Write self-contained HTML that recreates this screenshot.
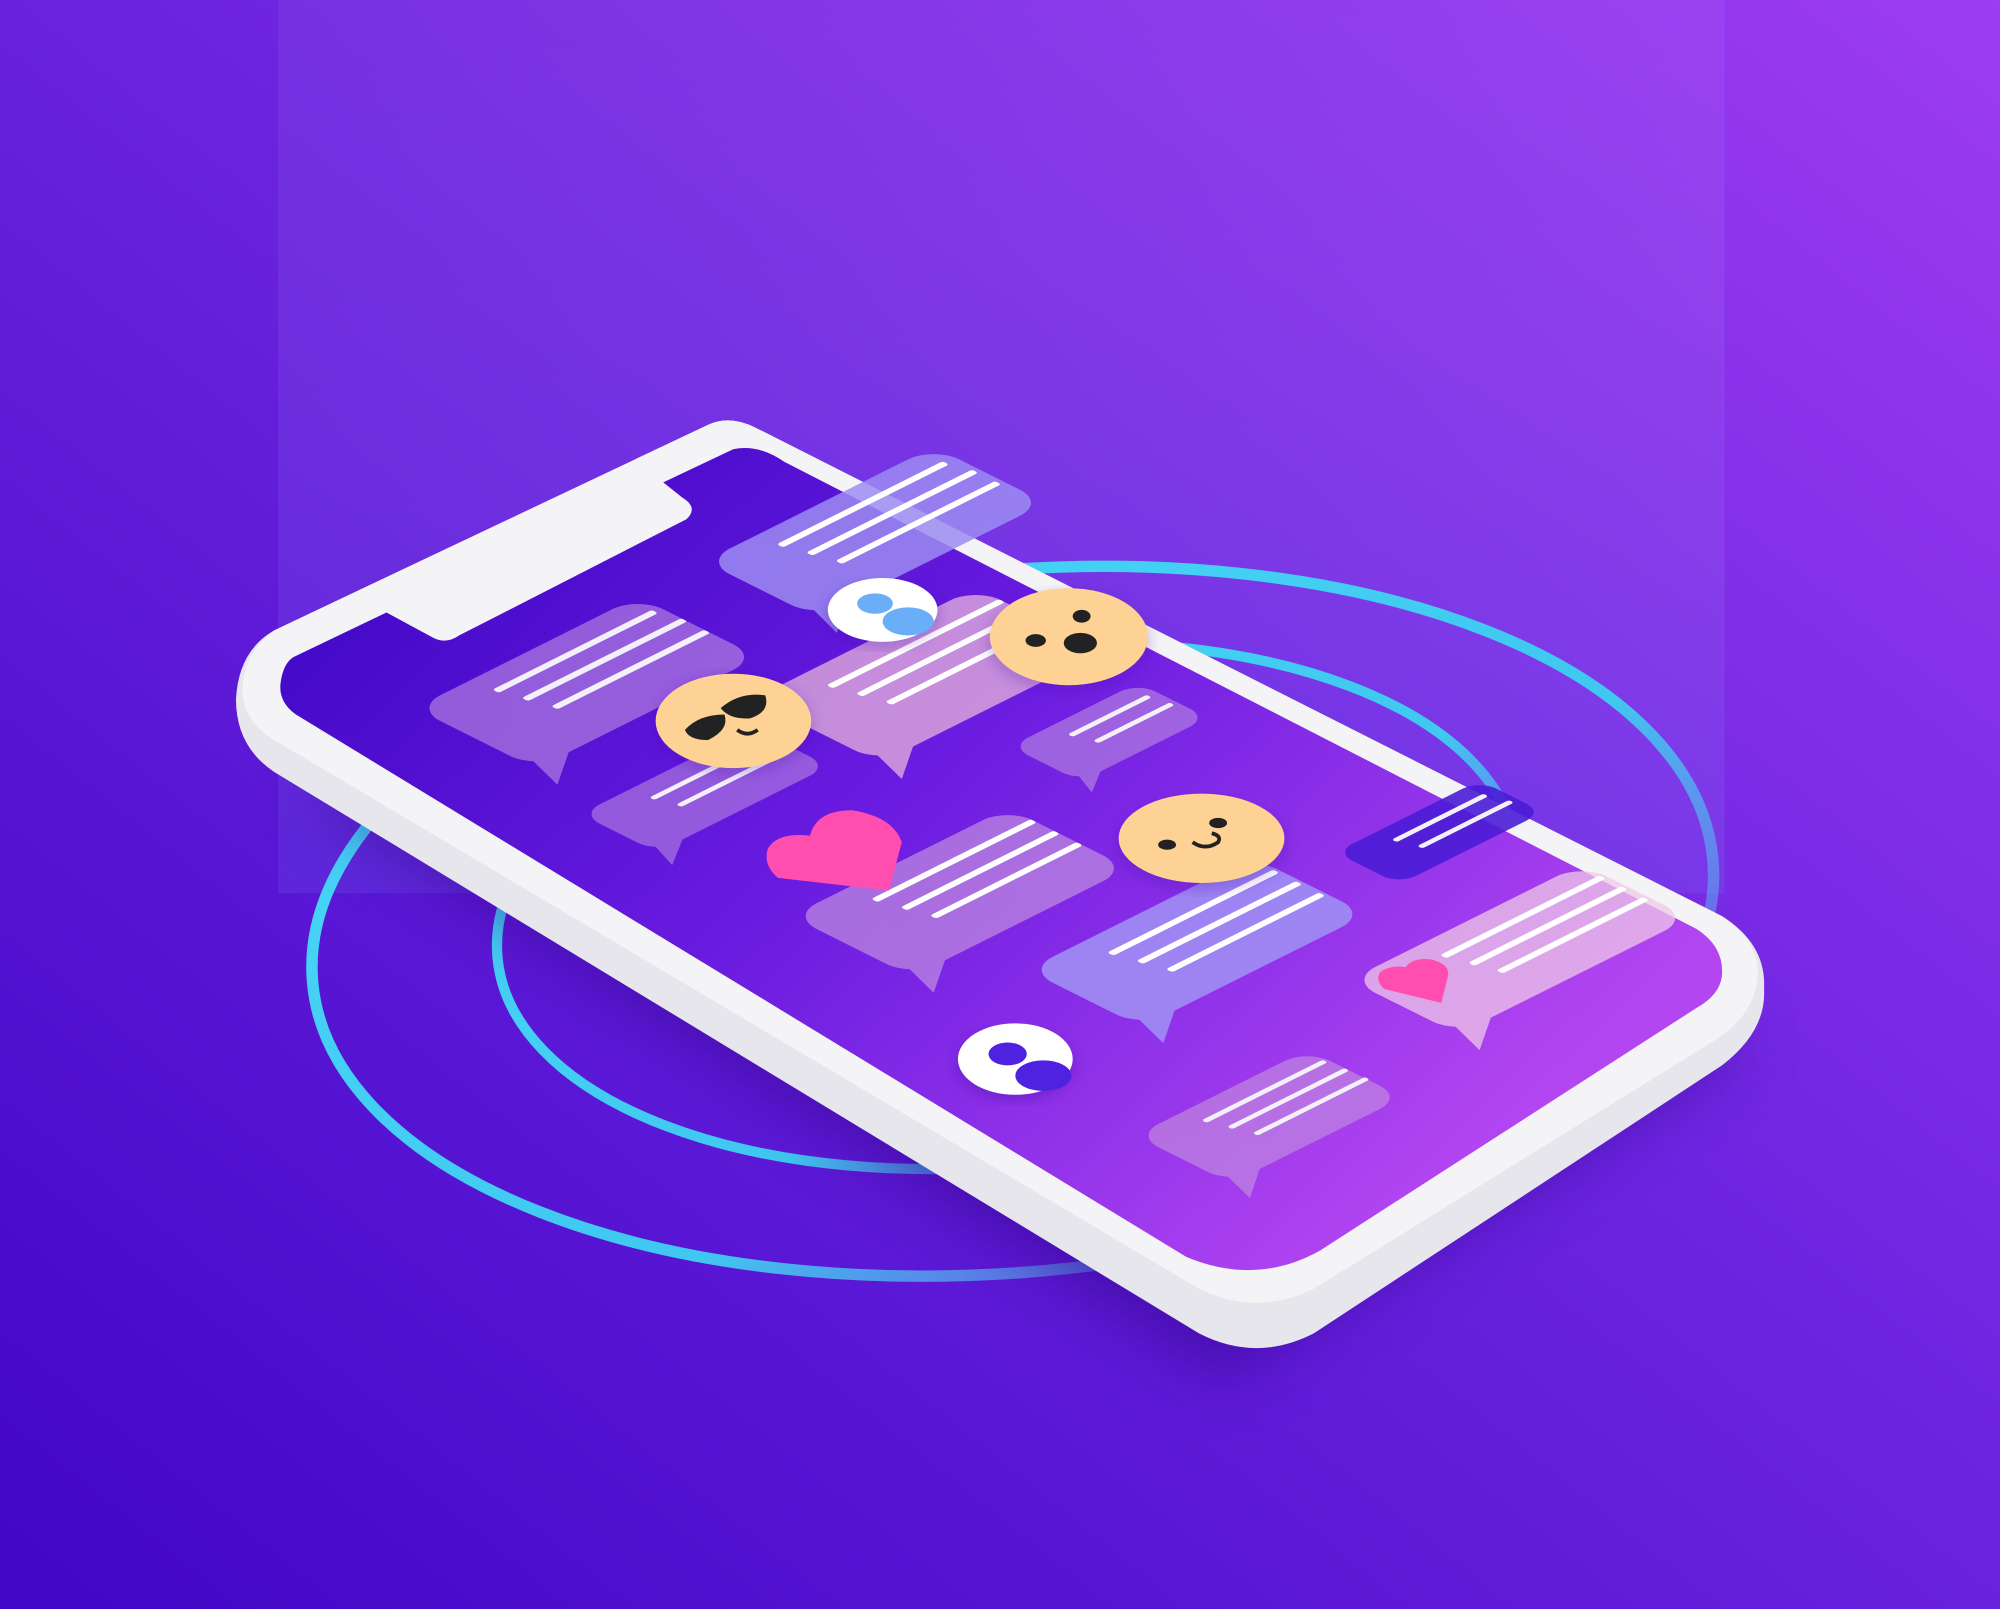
<!DOCTYPE html>
<html><head><meta charset="utf-8"><style>html,body{margin:0;padding:0;overflow:hidden;background:#5a14d8}svg{display:block}</style></head>
<body>
<svg width="2000" height="1609" viewBox="0 0 1568 1261" preserveAspectRatio="none" xmlns="http://www.w3.org/2000/svg">
<defs>
<linearGradient id="bg" x1="0" y1="1" x2="1" y2="0">
<stop offset="0" stop-color="#4106c6"/><stop offset="0.55" stop-color="#6d24e0"/><stop offset="1" stop-color="#9d3cf2"/></linearGradient>
<linearGradient id="panel" x1="0" y1="0" x2="0" y2="1">
<stop offset="0" stop-color="#ffffff" stop-opacity="0.05"/><stop offset="1" stop-color="#7aa0ff" stop-opacity="0.12"/></linearGradient>
<linearGradient id="scr" x1="0" y1="0" x2="1" y2="0.6">
<stop offset="0" stop-color="#3a04c2"/><stop offset="0.5" stop-color="#6a1ce0"/><stop offset="1" stop-color="#b446f2"/></linearGradient>
<linearGradient id="ring" x1="0" y1="0" x2="1" y2="1">
<stop offset="0" stop-color="#48d8f8"/><stop offset="0.6" stop-color="#40c8f0"/><stop offset="1" stop-color="#8a60f0" stop-opacity="0.2"/></linearGradient>
<filter id="blur"><feGaussianBlur stdDeviation="25"/></filter>
<filter id="sb"><feGaussianBlur stdDeviation="6"/></filter>
</defs>
<rect width="1568" height="1261" fill="url(#bg)"/>
<rect x="218" y="0" width="1134" height="700" fill="url(#panel)"/>
<ellipse cx="794" cy="722" rx="551" ry="275" transform="rotate(-5 794 722)" fill="none" stroke="url(#ring)" stroke-width="9"/>
<ellipse cx="790" cy="710" rx="402" ry="203" transform="rotate(-6 790 710)" fill="none" stroke="url(#ring)" stroke-width="8"/>
<path d="M240 620 L960 1080 L1370 820 L700 480 Z" fill="#2a0580" opacity="0.5" filter="url(#blur)"/>
<path d="M555 333 Q572 325 592 335 L1350 718 Q1385 740 1383 775 Q1385 808 1350 835 L1030 1045 Q985 1068 940 1045 L215 605 Q185 585 185 548 Q187 510 215 494 Z" fill="#e6e6ec"/>
<path d="M555 333 Q572 325 592 335 L1350 718 Q1380 738 1378 765 Q1376 795 1345 815 L1030 1010 Q985 1032 940 1010 L215 580 Q190 565 190 540 Q192 510 215 494 Z" fill="#f4f4f6"/>
<path d="M230 515 L303 480 L340 500 Q350 505 360 498 L538 407 Q548 398 535 390 L520 378 L575 352 Q595 348 615 362 L1330 728 Q1352 742 1350 765 Q1348 780 1330 790 L1035 980 Q985 1008 930 985 L232 560 Q218 550 220 535 Q222 520 230 515 Z" fill="url(#scr)"/>
<!-- B2 -->
<g transform="matrix(1 -0.5 1 0.5 325 555)">
<g opacity="0.7" fill="#b07ee0"><rect width="175" height="95" rx="20"/><path d="M6 85 L40 85 L-4 116 Z"/></g>
<rect x="45" y="16" width="125" height="5" rx="2" fill="#f4f0fa"/><rect x="50" y="34" width="125" height="5" rx="2" fill="#f4f0fa"/><rect x="55" y="52" width="120" height="5" rx="2" fill="#f4f0fa"/></g>
<!-- B4 -->
<g transform="matrix(1 -0.5 1 0.5 455 638)">
<g opacity="0.65" fill="#b07ee0"><rect width="135" height="60" rx="15"/><path d="M5 52 L32 52 L-4 76 Z"/></g>
<rect x="40" y="14" width="85" height="4" rx="2" fill="#f4f0fa"/><rect x="45" y="30" width="85" height="4" rx="2" fill="#f4f0fa"/></g>
<!-- B3 -->
<g transform="matrix(1 -0.5 1 0.5 590 548)">
<g opacity="0.75" fill="#e6b4dc"><rect width="175" height="100" rx="20"/><path d="M6 90 L40 90 L-4 121 Z"/></g>
<rect x="40" y="18" width="135" height="5" rx="2" fill="#fff"/><rect x="45" y="36" width="130" height="5" rx="2" fill="#fff"/><rect x="50" y="54" width="125" height="5" rx="2" fill="#fff"/></g>
<!-- B1 -->
<g transform="matrix(1 -0.5 1 0.5 552 440)">
<g opacity="0.85" fill="#9c8cf2"><rect width="180" height="88" rx="20"/><path d="M6 78 L40 78 L-4 108 Z"/></g>
<rect x="42" y="15" width="130" height="5" rx="2" fill="#fff"/><rect x="47" y="33" width="130" height="5" rx="2" fill="#fff"/><rect x="52" y="51" width="125" height="5" rx="2" fill="#fff"/></g>
<!-- B5 -->
<g transform="matrix(1 -0.5 1 0.5 792 585)">
<g opacity="0.7" fill="#b07ee0"><rect width="100" height="55" rx="14"/><path d="M5 47 L28 47 L-4 68 Z"/></g>
<rect x="32" y="13" width="62" height="4" rx="2" fill="#f4f0fa"/><rect x="37" y="28" width="60" height="4" rx="2" fill="#f4f0fa"/></g>
<!-- B6 -->
<g transform="matrix(1 -0.5 1 0.5 620 718)">
<g opacity="0.7" fill="#c08ee0"><rect width="170" height="95" rx="20"/><path d="M6 85 L40 85 L-4 116 Z"/></g>
<rect x="45" y="18" width="125" height="5" rx="2" fill="#fff"/><rect x="50" y="36" width="120" height="5" rx="2" fill="#fff"/><rect x="55" y="54" width="115" height="5" rx="2" fill="#fff"/></g>
<!-- B7 -->
<g transform="matrix(1 -0.5 1 0.5 805 760)">
<g opacity="0.92" fill="#a08cf4"><rect width="177" height="90" rx="20"/><path d="M6 80 L40 80 L-4 111 Z"/></g>
<rect x="45" y="18" width="130" height="5" rx="2" fill="#fff"/><rect x="50" y="36" width="125" height="5" rx="2" fill="#fff"/><rect x="55" y="54" width="120" height="5" rx="2" fill="#fff"/></g>
<!-- B8 -->
<g transform="matrix(1 -0.5 1 0.5 1047 668)">
<rect width="113" height="50" rx="13" fill="#4a1cd6" opacity="0.9"/>
<rect x="32" y="12" width="72" height="4" rx="2" fill="#f4f0fa"/><rect x="37" y="27" width="72" height="4" rx="2" fill="#f4f0fa"/></g>
<!-- B9 -->
<g transform="matrix(1 -0.5 1 0.5 1058 768)">
<g opacity="0.75" fill="#f0c8e8"><rect width="182" height="85" rx="20"/><path d="M6 75 L40 75 L-4 106 Z"/></g>
<rect x="55" y="16" width="125" height="5" rx="2" fill="#fff"/><rect x="60" y="33" width="120" height="5" rx="2" fill="#fff"/><rect x="65" y="50" width="115" height="5" rx="2" fill="#fff"/></g>
<!-- B10 -->
<g transform="matrix(1 -0.5 1 0.5 890 890)">
<g opacity="0.7" fill="#c088e0"><rect width="135" height="75" rx="18"/><path d="M5 66 L35 66 L-4 94 Z"/></g>
<rect x="38" y="14" width="95" height="4" rx="2" fill="#f4f0fa"/><rect x="43" y="29" width="92" height="4" rx="2" fill="#f4f0fa"/><rect x="48" y="44" width="88" height="4" rx="2" fill="#f4f0fa"/></g>
<!-- avatars -->
<ellipse cx="692" cy="482" rx="43" ry="24" fill="#3a0aa0" opacity="0.3" filter="url(#sb)"/>
<ellipse cx="692" cy="478" rx="43" ry="25" fill="#fff"/>
<ellipse cx="686" cy="473" rx="14" ry="8" fill="#6aaef8"/><ellipse cx="712" cy="487" rx="20" ry="11" fill="#6aaef8"/>
<ellipse cx="796" cy="835" rx="45" ry="26" fill="#2a0580" opacity="0.3" filter="url(#sb)"/>
<ellipse cx="796" cy="830" rx="45" ry="28" fill="#fff"/>
<ellipse cx="790" cy="826" rx="15" ry="9" fill="#4e22e0"/><ellipse cx="818" cy="843" rx="22" ry="12" fill="#4e22e0"/>
<!-- emojis -->
<ellipse cx="575" cy="568" rx="60" ry="37" fill="#3a0aa0" opacity="0.3" filter="url(#sb)"/>
<ellipse cx="575" cy="565" rx="61" ry="37" fill="#fed194"/>
<path d="M537 572 Q548 560 568 560 Q572 572 555 580 Q540 580 537 572 Z" fill="#222"/>
<path d="M565 555 Q580 542 600 545 Q604 558 588 563 Q572 564 565 555 Z" fill="#222"/>
<path d="M578 572 Q586 578 594 572" stroke="#222" stroke-width="3" fill="none"/>
<ellipse cx="838" cy="503" rx="62" ry="37" fill="#3a0aa0" opacity="0.3" filter="url(#sb)"/>
<ellipse cx="838" cy="499" rx="62" ry="38" fill="#fed194"/>
<ellipse cx="812" cy="502" rx="8" ry="5" fill="#222"/><ellipse cx="848" cy="483" rx="7" ry="5" fill="#222"/><ellipse cx="847" cy="504" rx="13" ry="8" fill="#222"/>
<ellipse cx="942" cy="662" rx="65" ry="34" fill="#3a0aa0" opacity="0.3" filter="url(#sb)"/>
<ellipse cx="942" cy="657" rx="65" ry="35" fill="#fed194"/>
<ellipse cx="915" cy="662" rx="7" ry="4" fill="#222"/><ellipse cx="955" cy="645" rx="7" ry="4" fill="#222"/>
<path d="M935 660 Q945 667 955 660 Q958 655 950 653" stroke="#222" stroke-width="3" fill="none"/>
<!-- hearts -->
<path d="M610 688 Q598 678 602 665 Q610 652 635 655 Q640 635 668 635 Q700 640 707 660 L697 698 Z" fill="#ff4db0"/>
<path d="M1085 775 Q1078 768 1082 762 Q1090 756 1102 758 Q1108 750 1122 752 Q1138 756 1135 766 L1130 786 Z" fill="#ff4db0"/>
</svg>
</body></html>
